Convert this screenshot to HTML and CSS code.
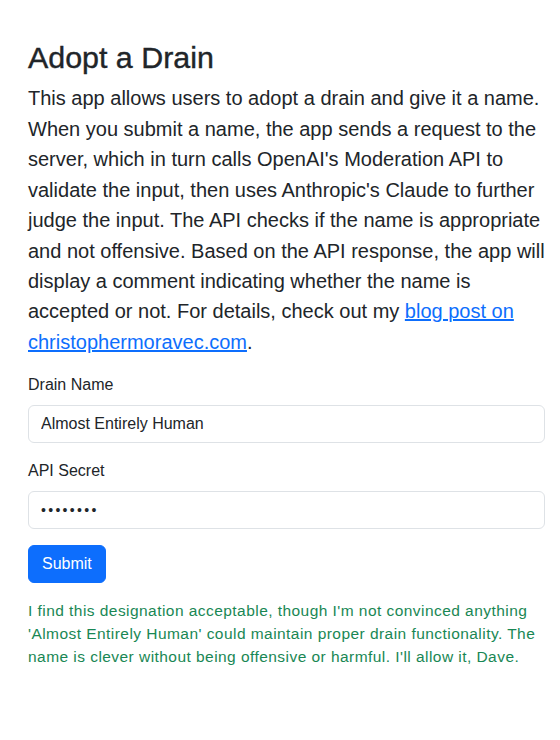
FILE: index.html
```html
<!DOCTYPE html>
<html lang="en">
<head>
<meta charset="utf-8">
<title>Adopt a Drain</title>
<link rel="stylesheet" href="styles.css">
</head>
<body>
<main class="page">
  <h1 class="title">Adopt a Drain</h1>
  <p class="intro">This app allows users to adopt a drain and give it a name. When you submit a name, the app sends a request to the server, which in turn calls OpenAI's Moderation API to validate the input, then uses Anthropic's Claude to further judge the input. The API checks if the name is appropriate and not offensive. Based on the API response, the app will display a comment indicating whether the name is accepted or not. For details, check out my <a class="link" href="#">blog post on christophermoravec.com</a>.</p>
  <form class="form">
    <div class="field">
      <label class="label" for="drain">Drain Name</label>
      <input class="control" id="drain" type="text" value="Almost Entirely Human">
    </div>
    <div class="field">
      <label class="label" for="secret">API Secret</label>
      <input class="control control-secret" id="secret" type="password" value="secretke">
    </div>
    <div class="actions">
      <button class="btn" type="button">Submit</button>
    </div>
  </form>
  <p class="result">I find this designation acceptable, though I'm not convinced anything 'Almost Entirely Human' could maintain proper drain functionality. The name is clever without being offensive or harmful. I'll allow it, Dave.</p>
</main>
</body>
</html>
```

FILE: styles.css
```css
* { box-sizing: border-box; }

html, body {
  margin: 0;
  padding: 0;
  background: #ffffff;
}

body {
  font-family: "Liberation Sans", Arial, sans-serif;
  font-size: 16px;
  line-height: 1.5;
  color: #212529;
}

.page {
  padding: 39px 15px 0 28px;
}

.title {
  margin: 0 0 8px;
  font-size: 30.4px;
  font-weight: 500;
  line-height: 1.2;
  color: #212529;
  -webkit-text-stroke: 0.4px #212529;
}

.intro {
  margin: 0 0 16px;
  font-size: 20px;
  line-height: 30.4px;
}

.link {
  color: #0d6efd;
  text-decoration: underline;
}

.form {
  display: flex;
  flex-direction: column;
  gap: 16px;
}

.field {
  display: flex;
  flex-direction: column;
}

.label {
  display: block;
  margin-bottom: 8px;
  font-size: 16px;
  line-height: 24px;
}

.control {
  display: block;
  width: 100%;
  height: 38px;
  padding: 6px 12px;
  font-family: inherit;
  font-size: 16px;
  line-height: 24px;
  color: #212529;
  background: #fff;
  border: 1px solid #dee2e6;
  border-radius: 6px;
  outline: none;
}

.control-secret {
  font-size: 14px;
  letter-spacing: 2.3px;
}

.actions {
  display: flex;
}

.btn {
  height: 38px;
  padding: 6px 13px;
  font-family: inherit;
  font-size: 16px;
  line-height: 24px;
  color: #fff;
  background: #0d6efd;
  border: 1px solid #0d6efd;
  border-radius: 6px;
}

.result {
  margin: 16px 0 0;
  font-size: 15.5px;
  letter-spacing: 0.45px;
  line-height: 23px;
  color: #198754;
}
```
